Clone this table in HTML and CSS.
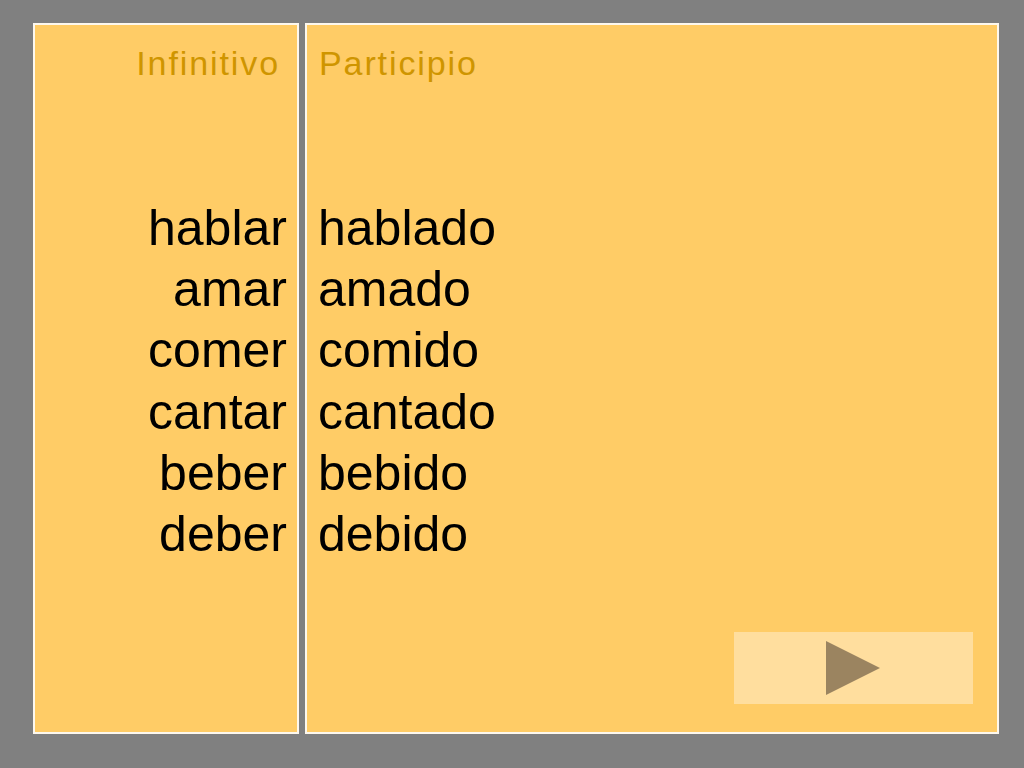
FILE: index.html
```html
<!DOCTYPE html>
<html lang="es">
<head>
<meta charset="utf-8">
<title>Infinitivo y Participio</title>
<link rel="stylesheet" href="styles.css">
</head>
<body>
<main class="slide">
  <section class="panel panel-left">
    <h2 class="heading">Infinitivo</h2>
    <ul class="words">
      <li>hablar</li>
      <li>amar</li>
      <li>comer</li>
      <li>cantar</li>
      <li>beber</li>
      <li>deber</li>
    </ul>
  </section>
  <section class="panel panel-right">
    <h2 class="heading">Participio</h2>
    <ul class="words">
      <li>hablado</li>
      <li>amado</li>
      <li>comido</li>
      <li>cantado</li>
      <li>bebido</li>
      <li>debido</li>
    </ul>
    <button class="next" type="button" aria-label="Siguiente">
      <svg width="239" height="72" viewBox="0 0 239 72"><polygon points="92,9 146,36 92,63" fill="#9b8460"/></svg>
    </button>
  </section>
</main>
</body>
</html>
```
FILE: styles.css
```css
html, body {
  margin: 0;
  padding: 0;
  background: #808080;
}
body {
  width: 1024px;
  height: 768px;
  overflow: hidden;
  font-family: "Liberation Sans", Arial, sans-serif;
}
.slide {
  display: flex;
  gap: 6px;
  padding: 23px 0 0 33px;
}
.panel {
  box-sizing: border-box;
  height: 711px;
  background: #ffcc66;
  border: 2px solid #fdf8ee;
  display: flex;
  flex-direction: column;
}
.panel-left {
  width: 266px;
  text-align: right;
}
.panel-right {
  width: 694px;
  text-align: left;
}
.heading {
  margin: 20px 0 0 0;
  font-size: 34px;
  line-height: 36px;
  font-weight: normal;
  letter-spacing: 1.9px;
  color: #cf9500;
}
.panel-left .heading {
  padding-right: 17px;
}
.panel-right .heading {
  padding-left: 12px;
}
.words {
  list-style: none;
  margin: 117px 0 0 0;
  padding: 0;
  font-size: 50px;
  line-height: 61.2px;
  color: #000;
}
.panel-left .words {
  padding-right: 10px;
}
.panel-right .words {
  padding-left: 11px;
}
.next {
  margin: auto 24px 28px 0;
  align-self: flex-end;
  width: 239px;
  height: 72px;
  padding: 0;
  border: 0;
  background: #ffde9e;
  display: block;
  cursor: pointer;
}
.next svg {
  display: block;
}
```
